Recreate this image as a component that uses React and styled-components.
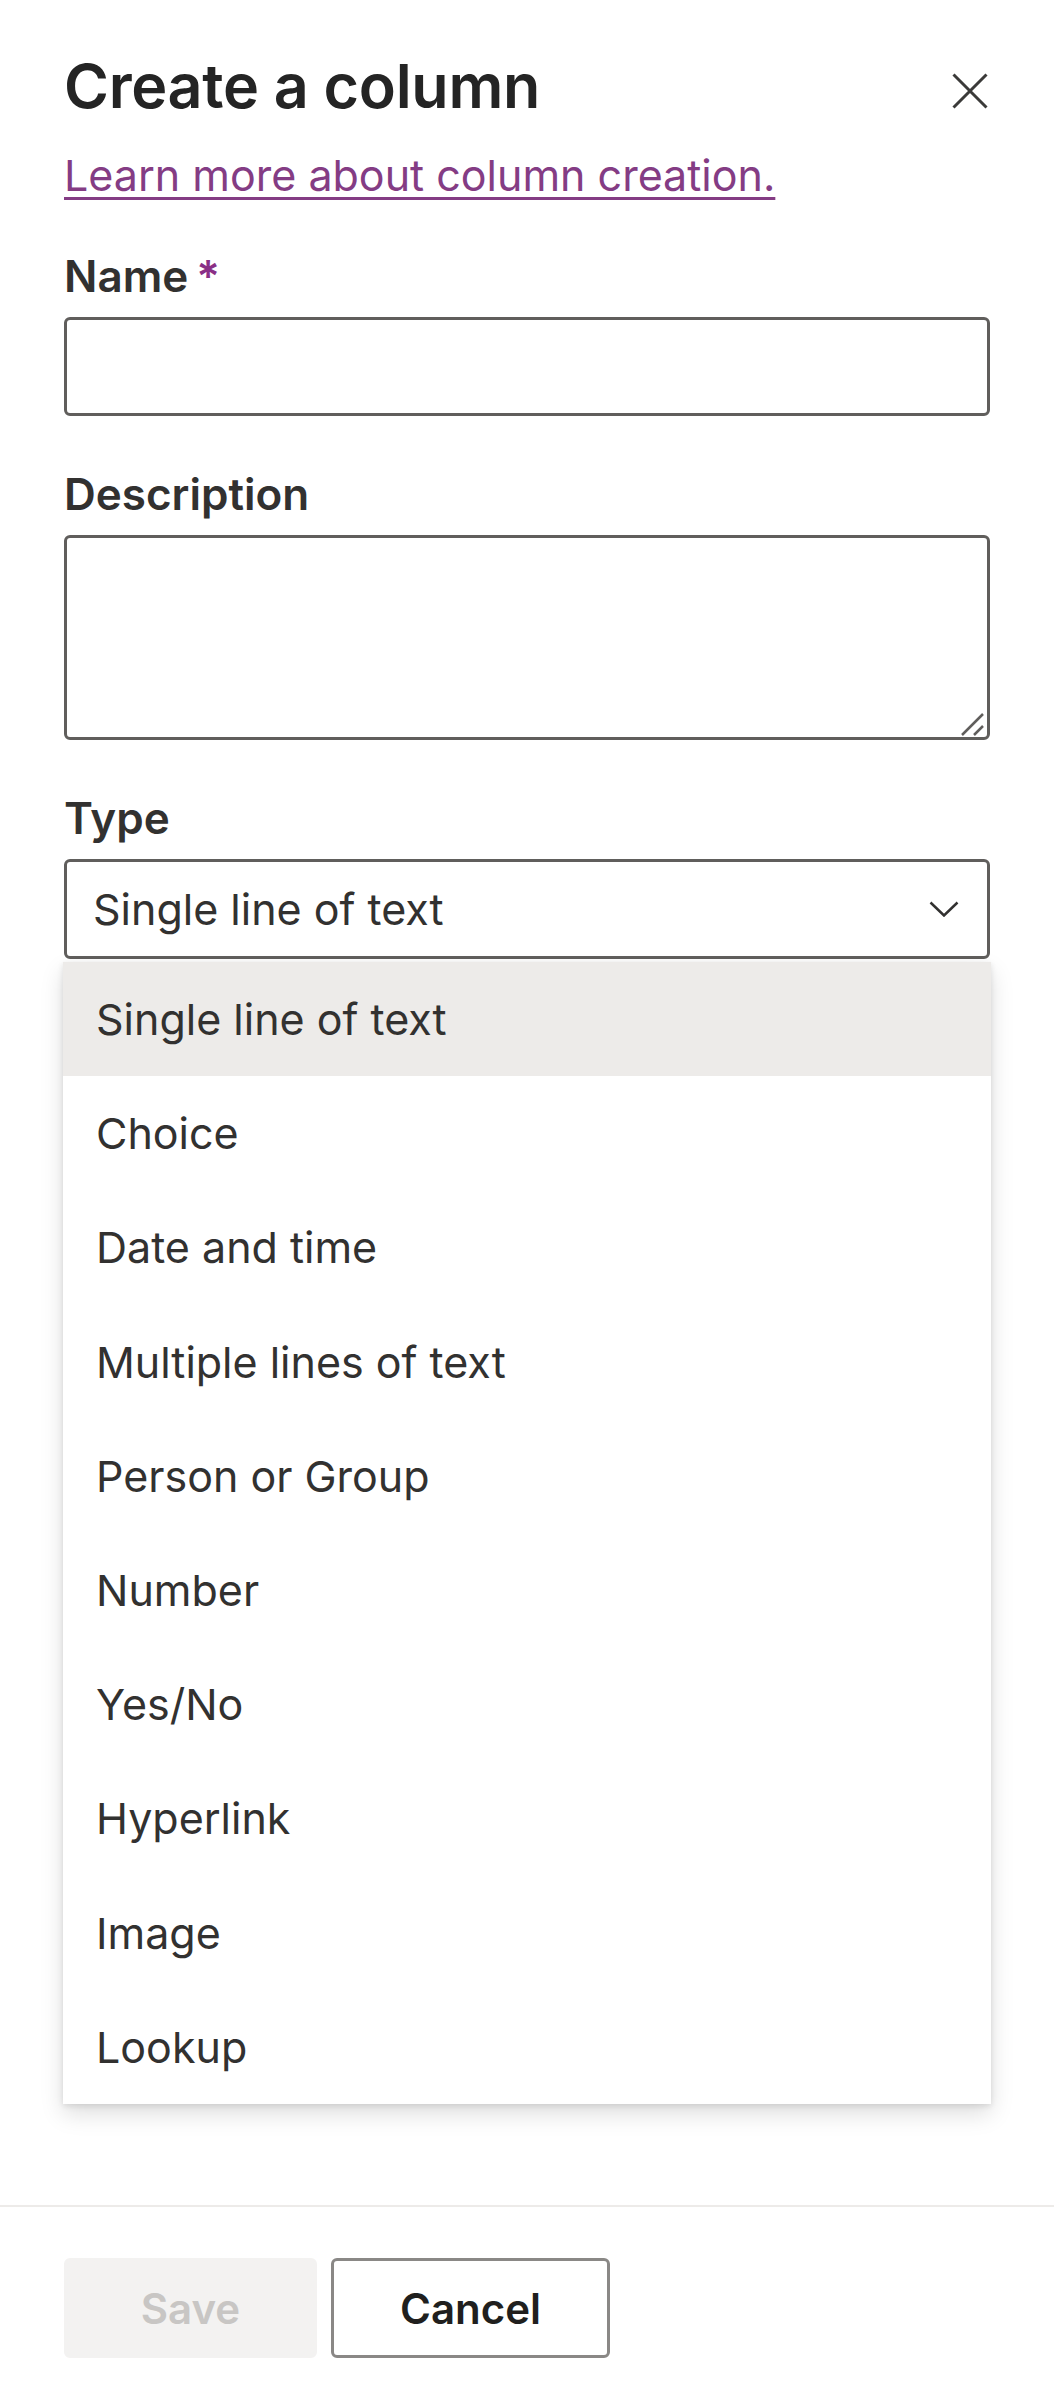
import React from 'react';
import styled, { createGlobalStyle } from 'styled-components';

const GlobalStyle = createGlobalStyle`
  html, body {
    margin: 0;
    padding: 0;
    background: #ffffff;
  }
  body {
    font-family: Inter, "Noto Sans", "Liberation Sans", sans-serif;
    color: #323130;
  }
  * {
    box-sizing: border-box;
  }
`;

const Panel = styled.div`
  /* the whole side panel, footer pinned to the bottom */
  display: flex;
  flex-direction: column;
  min-height: 2388px;
  width: 100%;
  background: #fff;
`;

const Content = styled.div`
  flex: 1;
  padding: 48px 64px 0;
`;

const Header = styled.div`
  display: flex;
  justify-content: space-between;
  align-items: flex-start;
`;

const Title = styled.h1`
  margin: 0;
  font-size: 61px;
  line-height: 76px;
  font-weight: 600;
  color: #242424;
  letter-spacing: -0.3px;
`;

const CloseButton = styled.button`
  width: 36px;
  height: 36px;
  margin-top: 25px;
  margin-right: 2px;
  padding: 0;
  border: 0;
  background: none;
  cursor: pointer;
  display: flex;
`;

const LearnLink = styled.a`
  display: inline-block;
  margin-top: 23px;
  font-size: 43px;
  line-height: 56px;
  color: #843c84;
  text-decoration: underline;
  text-decoration-thickness: 3px;
  text-underline-offset: 6px;
`;

const Field = styled.div`
  margin-top: ${(p) => (p.$first ? 45 : 50)}px;
`;

const Label = styled.label`
  display: block;
  margin-bottom: 13px;
  font-size: 44px;
  line-height: 56px;
  font-weight: 600;
  color: #323130;
`;

const Required = styled.span`
  margin-left: 8px;
  color: #8a2f86;
`;

const TextInput = styled.input`
  display: block;
  width: 100%;
  height: 99px;
  padding: 0 26px;
  border: 3px solid #605e5c;
  border-radius: 6px;
  font: 43px Inter, "Noto Sans", sans-serif;
  color: #323130;
  outline: none;
`;

const AreaWrap = styled.div`
  position: relative;
`;

const TextArea = styled.textarea`
  display: block;
  width: 100%;
  height: 205px;
  padding: 16px 26px;
  border: 3px solid #605e5c;
  border-radius: 6px;
  font: 43px Inter, "Noto Sans", sans-serif;
  color: #323130;
  resize: none;
  outline: none;
`;

const Grip = styled.svg`
  position: absolute;
  right: 6px;
  bottom: 4px;
  width: 24px;
  height: 24px;
`;

const DropdownWrap = styled.div`
  position: relative;
`;

const DropdownBox = styled.div`
  display: flex;
  align-items: center;
  justify-content: space-between;
  height: 100px;
  padding: 0 28px 0 26px;
  border: 3px solid #605e5c;
  border-radius: 6px;
  font-size: 43px;
  color: #323130;
`;

const Menu = styled.ul`
  position: absolute;
  top: calc(100% + 3px);
  left: -1px;
  right: -1px;
  margin: 0;
  padding: 0;
  list-style: none;
  background: #fff;
  box-shadow: 0 10px 22px rgba(0, 0, 0, 0.13), 0 2px 6px rgba(0, 0, 0, 0.11);
  z-index: 10;
`;

const MenuItem = styled.li`
  display: flex;
  align-items: center;
  height: 114.2px;
  padding: 0 33px;
  font-size: 43px;
  color: #323130;
  background: ${(p) => (p.$selected ? '#edebe9' : 'transparent')};
`;

const Footer = styled.div`
  display: flex;
  gap: 14px;
  padding: 51px 64px 30px;
  border-top: 2px solid #edebe9;
`;

const Button = styled.button`
  height: 100px;
  min-width: ${(p) => p.$width}px;
  padding: 0 40px;
  border-radius: 6px;
  font: 600 42px Inter, "Noto Sans", sans-serif;
  border: 3px solid ${(p) => (p.$disabled ? '#f3f2f1' : '#8a8886')};
  background: ${(p) => (p.$disabled ? '#f3f2f1' : '#ffffff')};
  color: ${(p) => (p.$disabled ? '#c8c6c4' : '#201f1e')};
  cursor: ${(p) => (p.$disabled ? 'default' : 'pointer')};
`;

const types = [
  'Single line of text',
  'Choice',
  'Date and time',
  'Multiple lines of text',
  'Person or Group',
  'Number',
  'Yes/No',
  'Hyperlink',
  'Image',
  'Lookup',
];

const App = () => {
  return (
    <>
      <GlobalStyle />
      <Panel>
        <Content>
          <Header>
            <Title>Create a column</Title>
            <CloseButton aria-label="Close">
              <svg width="36" height="36" viewBox="0 0 36 36">
                <path d="M1.5 1.5 L34.5 34.5 M34.5 1.5 L1.5 34.5" stroke="#3b3a39" strokeWidth="3" fill="none" />
              </svg>
            </CloseButton>
          </Header>
          <LearnLink href="#">Learn more about column creation.</LearnLink>

          <Field $first>
            <Label>
              Name<Required>*</Required>
            </Label>
            <TextInput type="text" />
          </Field>

          <Field>
            <Label>Description</Label>
            <AreaWrap>
              <TextArea />
              <Grip viewBox="0 0 24 24">
                <path d="M2 23 L23 2 M14 23 L23 14" stroke="#605e5c" strokeWidth="2.5" fill="none" />
              </Grip>
            </AreaWrap>
          </Field>

          <Field>
            <Label>Type</Label>
            <DropdownWrap>
              <DropdownBox>
                <span>Single line of text</span>
                <svg width="30" height="16" viewBox="0 0 30 16">
                  <path d="M1.5 1.5 L15 14.5 L28.5 1.5" stroke="#323130" strokeWidth="2.5" fill="none" />
                </svg>
              </DropdownBox>
              <Menu>
                {types.map((t, i) => (
                  <MenuItem key={t} $selected={i === 0}>
                    {t}
                  </MenuItem>
                ))}
              </Menu>
            </DropdownWrap>
          </Field>
        </Content>

        <Footer>
          <Button $disabled $width={253}>Save</Button>
          <Button $width={279}>Cancel</Button>
        </Footer>
      </Panel>
    </>
  );
};

export default App;
